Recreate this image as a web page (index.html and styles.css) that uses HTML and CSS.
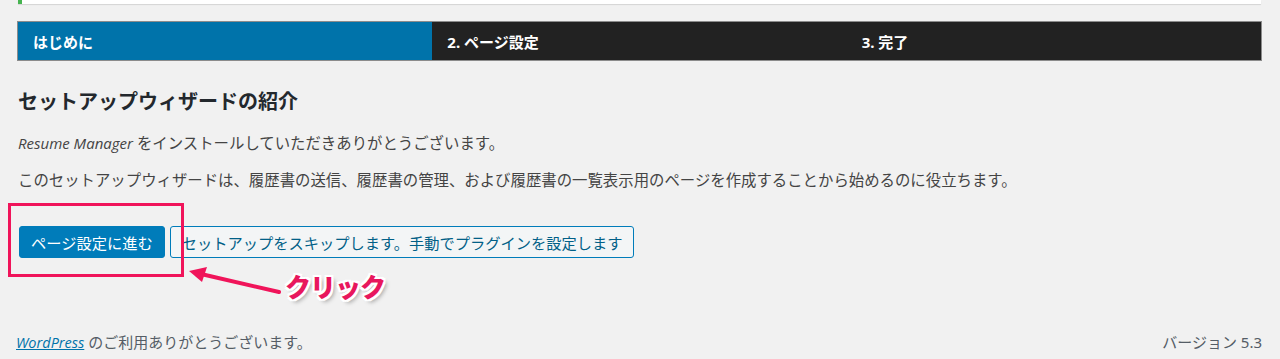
FILE: index.html
```html
<!DOCTYPE html>
<html lang="ja">
<head>
<meta charset="utf-8">
<title>セットアップウィザード</title>
<link rel="stylesheet" href="styles.css">
</head>
<body>
<div class="page">
  <div class="notice"></div>
  <ol class="steps">
    <li class="step active">はじめに</li>
    <li class="step">2. ページ設定</li>
    <li class="step">3. 完了</li>
  </ol>
  <h2 class="title">セットアップウィザードの紹介</h2>
  <p class="text"><em>Resume Manager</em> をインストールしていただきありがとうございます。</p>
  <p class="text">このセットアップウィザードは、履歴書の送信、履歴書の管理、および履歴書の一覧表示用のページを作成することから始めるのに役立ちます。</p>
  <div class="actions">
    <a class="btn btn-primary" href="#">ページ設定に進む</a>
    <a class="btn btn-secondary" href="#">セットアップをスキップします。手動でプラグインを設定します</a>
  </div>
  <footer class="footer">
    <span class="thanks"><a href="#" class="wp-link">WordPress</a> のご利用ありがとうございます。</span>
    <span class="version">バージョン 5.3</span>
  </footer>

  <div class="highlight"></div>
  <svg class="arrow" width="100" height="36" viewBox="0 0 100 36">
    <line x1="92" y1="27" x2="14" y2="9" stroke="#f0145a" stroke-width="4" stroke-linecap="round"/>
    <polygon points="2,6 20,2 15,17" fill="#f0145a"/>
  </svg>
  <div class="callout">クリック</div>
</div>
</body>
</html>
```

FILE: styles.css
```css
html, body {
  margin: 0;
  padding: 0;
  background: #f1f1f1;
}
body {
  font-family: "Noto Sans", "Noto Sans CJK JP", sans-serif;
  color: #444;
}
.page {
  position: relative;
  height: 359px;
  padding: 0 19px 0 18px;
  box-sizing: border-box;
  display: flex;
  flex-direction: column;
}
.notice {
  height: 4px;
  background: #fff;
  border-left: 4px solid #46b450;
  box-shadow: 0 1px 1px rgba(0,0,0,0.12);
}
.steps {
  list-style: none;
  margin: 18px 0 0;
  padding: 0;
  display: flex;
  height: 38px;
  background: #222;
  box-shadow: 0 0 0 1px #8c8c8c;
}
.step {
  flex: 1;
  display: flex;
  align-items: center;
  padding-left: 15px;
  color: #fff;
  font-weight: bold;
  font-size: 15px;
}
.step.active {
  background: #0073aa;
}
.title {
  margin: 28px 0 0;
  font-size: 20px;
  line-height: 28px;
  font-weight: bold;
  color: #23282d;
}
.text {
  margin: 15px 0 0;
  font-size: 15.4px;
  line-height: 24px;
}
.text + .text {
  margin-top: 13px;
}
.text em {
  font-family: "Open Sans", "Noto Sans", sans-serif;
  font-size: 15px;
}
.actions {
  display: flex;
  gap: 5px;
  margin-top: 33px;
  padding-left: 1px;
}
.btn {
  display: flex;
  align-items: center;
  height: 32px;
  box-sizing: border-box;
  padding: 0 11px;
  border-radius: 3px;
  font-size: 15.25px;
  text-decoration: none;
  border: 1px solid #007cba;
}
.btn-primary {
  background: #007cba;
  color: #fff;
}
.btn-secondary {
  background: #f3f5f6;
  color: #016087;
}
.footer {
  display: flex;
  justify-content: space-between;
  margin-top: auto;
  margin-left: -2px;
  margin-right: -1px;
  height: 36px;
  align-items: center;
  font-size: 15px;
  color: #555d66;
}
.wp-link {
  color: #0073aa;
  font-style: italic;
  font-family: "Open Sans", "Noto Sans", sans-serif;
  font-size: 14.5px;
}
.highlight {
  position: absolute;
  left: 8px;
  top: 203px;
  width: 176px;
  height: 74px;
  box-sizing: border-box;
  border: 3px solid #f0145a;
}
.arrow {
  position: absolute;
  left: 187px;
  top: 265px;
}
.callout {
  position: absolute;
  left: 285px;
  top: 270px;
  font-size: 26px;
  line-height: 34px;
  font-weight: 900;
  color: #e8175d;
  letter-spacing: -1px;
  text-shadow:
    2px 0 0 #fff, -2px 0 0 #fff, 0 2px 0 #fff, 0 -2px 0 #fff,
    2px 2px 0 #fff, -2px -2px 0 #fff, 2px -2px 0 #fff, -2px 2px 0 #fff,
    3px 3px 4px rgba(0,0,0,0.35);
}
```
